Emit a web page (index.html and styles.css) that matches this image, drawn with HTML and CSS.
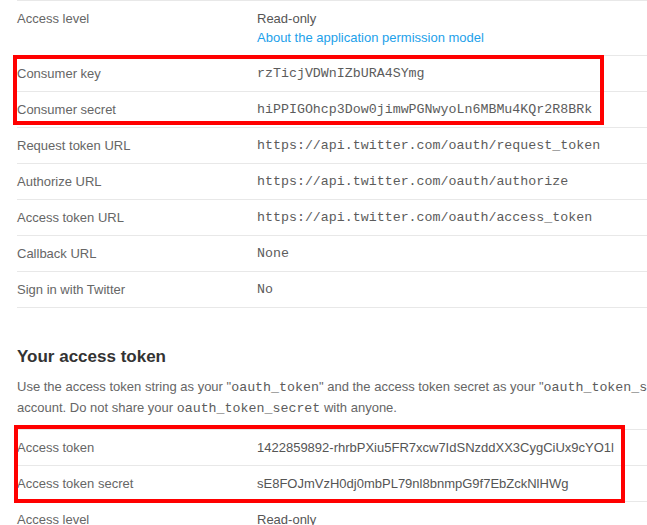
FILE: index.html
```html
<!DOCTYPE html>
<html>
<head>
<meta charset="utf-8">
<link rel="stylesheet" href="styles.css">
</head>
<body>
<div class="page">
  <div class="table">
    <div class="row">
      <div class="label">Access level</div>
      <div class="value">Read-only<br><a class="link" href="#">About the application permission model</a></div>
    </div>
    <div class="highlight hl-consumer">
      <div class="row">
        <div class="label">Consumer key</div>
        <div class="value mono">rzTicjVDWnIZbURA4SYmg</div>
      </div>
      <div class="row">
        <div class="label">Consumer secret</div>
        <div class="value mono">hiPPIGOhcp3Dow0jimwPGNwyoLn6MBMu4KQr2R8BRk</div>
      </div>
    </div>
    <div class="row">
      <div class="label">Request token URL</div>
      <div class="value mono">https://api.twitter.com/oauth/request_token</div>
    </div>
    <div class="row">
      <div class="label">Authorize URL</div>
      <div class="value mono">https://api.twitter.com/oauth/authorize</div>
    </div>
    <div class="row">
      <div class="label">Access token URL</div>
      <div class="value mono">https://api.twitter.com/oauth/access_token</div>
    </div>
    <div class="row">
      <div class="label">Callback URL</div>
      <div class="value mono">None</div>
    </div>
    <div class="row">
      <div class="label">Sign in with Twitter</div>
      <div class="value mono">No</div>
    </div>
  </div>

  <h2 class="heading">Your access token</h2>
  <p class="intro">Use the access token string as your "<code>oauth_token</code>" and the access token secret as your "<code>oauth_token_secret</code>" to sign requests with your own Twitter<br>account. Do not share your <code>oauth_token_secret</code> with anyone.</p>

  <div class="table table-open">
    <div class="highlight hl-token">
      <div class="row">
        <div class="label">Access token</div>
        <div class="value">1422859892-rhrbPXiu5FR7xcw7IdSNzddXX3CygCiUx9cYO1l</div>
      </div>
      <div class="row">
        <div class="label">Access token secret</div>
        <div class="value">sE8FOJmVzH0dj0mbPL79nl8bnmpG9f7EbZckNlHWg</div>
      </div>
    </div>
    <div class="row">
      <div class="label">Access level</div>
      <div class="value">Read-only</div>
    </div>
  </div>
</div>
</body>
</html>
```

FILE: styles.css
```css
html, body {
  margin: 0;
  padding: 0;
  overflow: hidden;
  background: #fff;
}
body {
  font-family: "Liberation Sans", Arial, sans-serif;
  font-size: 13px;
  color: #555;
}
.page {
  width: 1000px;
  padding-left: 17px;
}
.table {
  border-bottom: 1px solid #e8e8e8;
}
.row {
  display: flex;
  border-top: 1px solid #e8e8e8;
  padding: 9px 0 8px;
  line-height: 18px;
}
.label {
  width: 240px;
  flex: none;
  color: #666;
}
.value {
  color: #555;
}
.mono {
  font-family: "Liberation Mono", "Courier New", monospace;
  font-size: 13.3px;
  color: #5c5c5c;
}
.link {
  color: #1da1ea;
  text-decoration: none;
  display: inline-block;
  line-height: 19px;
}
.highlight {
  position: relative;
}
.highlight::after {
  content: "";
  position: absolute;
  border: 4px solid #ff0000;
  box-sizing: border-box;
  pointer-events: none;
}
.hl-consumer::after {
  top: 0;
  left: -4px;
  width: 591px;
  height: 70px;
}
.hl-token::after {
  top: -4px;
  left: -3px;
  width: 611px;
  height: 78px;
}
.heading {
  margin: 39px 0 0;
  font-size: 17px;
  line-height: 20px;
  font-weight: bold;
  color: #333;
}
.intro {
  margin: 10px 0 10px;
  line-height: 20px;
  color: #666;
}
.intro code {
  font-family: "Liberation Mono", "Courier New", monospace;
  font-size: 13.3px;
  color: #5c5c5c;
}
.table-open {
  border-bottom: none;
}
```
